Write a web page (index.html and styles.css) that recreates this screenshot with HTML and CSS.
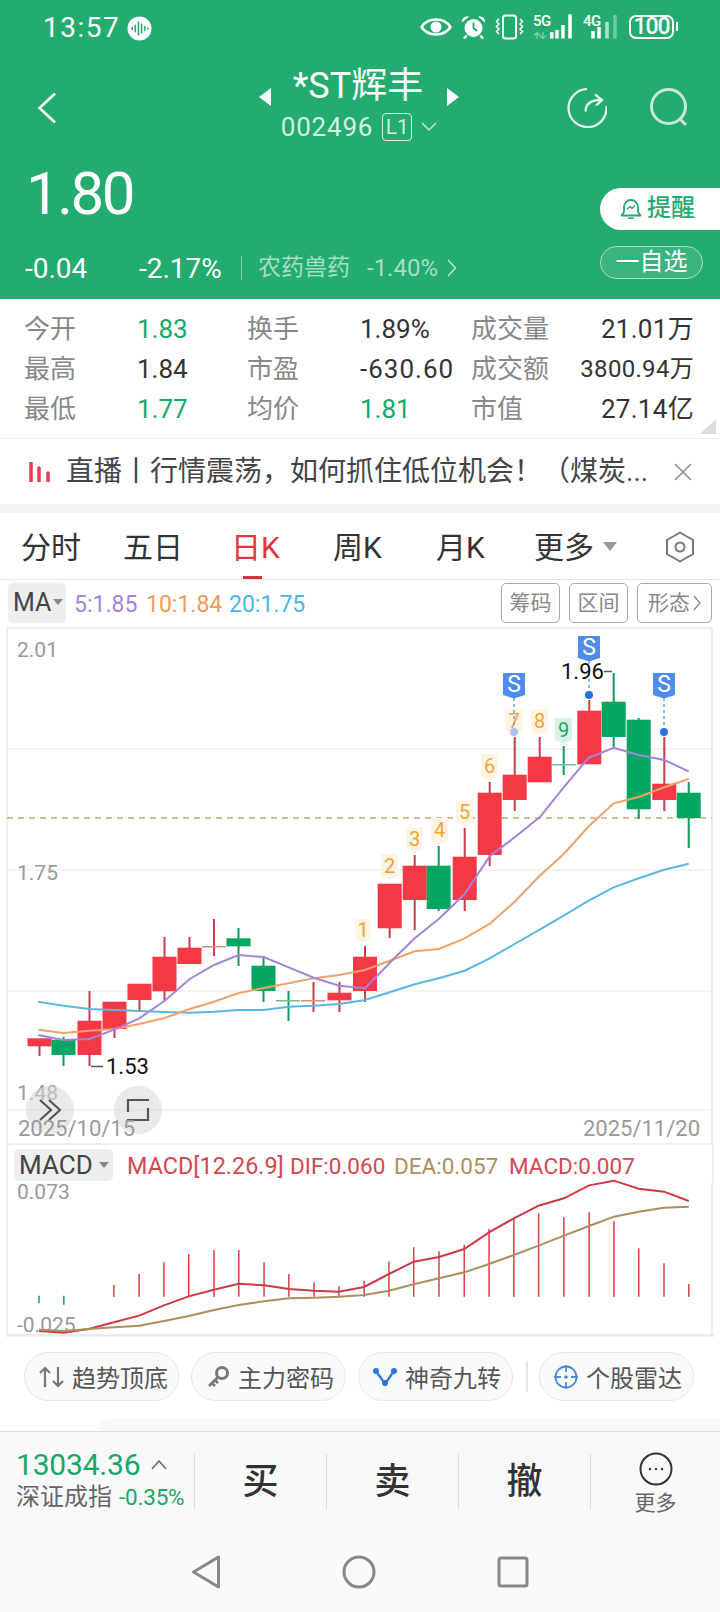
FILE: index.html
```html
<!DOCTYPE html>
<html lang="zh">
<head>
<meta charset="utf-8">
<title>*ST辉丰</title>
<link rel="stylesheet" href="styles.css">
</head>
<body>
<div class="app">
  <header class="top">
    <div class="status">
      <div class="status-left">
        <span class="time">13:57</span>
        <svg class="voice" width="25" height="25" viewBox="0 0 24 24"><circle cx="12" cy="12" r="11.5" fill="#fff"/><path d="M5 11v2M8 9v6M11 6v12M14 8v8M17 10v4M20 11.500v1" stroke="#24ab70" stroke-width="1.500" stroke-linecap="round"/></svg>
      </div>
      <div class="status-right">
        <svg width="32" height="18" viewBox="0 0 32 18"><path d="M1.500 9C5 3.500 10 1.500 16 1.500S27 3.500 30.500 9C27 14.500 22 16.500 16 16.500S5 14.500 1.500 9Z" fill="none" stroke="#fff" stroke-width="2.500"/><circle cx="16" cy="9" r="5.500" fill="#fff"/></svg>
        <svg width="25" height="24" viewBox="0 0 25 24"><circle cx="12.500" cy="13" r="9" fill="#fff"/><path d="M12.500 7.500V13l3.500 3" fill="none" stroke="#24ab70" stroke-width="1.800"/><path d="M1 7.500a5.500 5.500 0 0 1 7-6ZM24 7.500a5.500 5.500 0 0 0-7-6Z" fill="#fff"/><path d="M5.500 20.500l-2.500 3M19.500 20.500l2.500 3" stroke="#fff" stroke-width="2.500"/></svg>
        <svg width="29" height="26" viewBox="0 0 29 26"><rect x="8" y="1.500" width="13" height="23" rx="2.500" fill="none" stroke="#fff" stroke-width="2"/><path d="M4 5l-2.500 2.500L4 10l-2.500 2.500L4 15l-2.500 2.500L4 20M25 5l2.500 2.500L25 10l2.500 2.500L25 15l2.500 2.500L25 20" fill="none" stroke="#fff" stroke-width="1.500"/></svg>
        <div class="signal signal-5g">
          <span class="net">5G</span>
          <svg class="net-arrows" width="14" height="7" viewBox="0 0 14 7"><path d="M4 7V1M1 3.500L4 .5l3 3M10 0v6M7 3.500l3 3 3-3" fill="none" stroke="#fff" stroke-opacity=".4" stroke-width="1.300"/></svg>
          <svg width="24" height="26" viewBox="0 0 24 26"><path d="M1.750 24.500V18.300M7 24.500V16M13 24.500V11M20 24.500V.3" stroke="#fff" stroke-width="3.500"/></svg>
        </div>
        <div class="signal signal-4g">
          <span class="net">4G</span>
          <svg width="28" height="26" viewBox="0 0 28 26"><path d="M3 24.500V17M9 24.500V13" stroke="#fff" stroke-width="3.500"/><path d="M17 24.500V8" stroke="#fff" stroke-opacity=".65" stroke-width="3.500"/><path d="M25 24.500V1" stroke="#fff" stroke-opacity=".35" stroke-width="3.500"/></svg>
        </div>
        <div class="battery"><span class="battery-level">100</span></div>
      </div>
    </div>

    <nav class="nav">
      <svg class="back" width="20" height="32" viewBox="0 0 20 32"><path d="M18 1.500L2.500 16 18 30.500" fill="none" stroke="#fff" stroke-width="2.500"/></svg>
      <div class="title-block">
        <div class="title-row">
          <span class="tri tri-left"></span>
          <h1 class="title">*ST辉丰</h1>
          <span class="tri tri-right"></span>
        </div>
        <div class="code-row">
          <span class="code">002496</span>
          <span class="level">L1</span>
          <svg width="16" height="10" viewBox="0 0 16 10"><path d="M1 1l7 7 7-7" fill="none" stroke="#bfe6d2" stroke-width="1.500"/></svg>
        </div>
      </div>
      <div class="nav-actions">
        <svg width="40" height="40" viewBox="0 0 40 40"><path d="M19 1.200A19 19 0 1 0 39.500 19" fill="none" stroke="#e4f5ec" stroke-width="2.300" stroke-linecap="round"/><path d="M18.700 22.700C18.700 15 24 12 34.500 12" fill="none" stroke="#e4f5ec" stroke-width="2.300" stroke-linecap="round"/><path d="M28.700 7L35 12 29.700 17" fill="none" stroke="#e4f5ec" stroke-width="2.300" stroke-linecap="round"/></svg>
        <svg width="40" height="40" viewBox="0 0 40 40"><circle cx="20.500" cy="18.500" r="17" fill="none" stroke="#c9e8d8" stroke-width="3"/><path d="M32 31l6 6" stroke="#c9e8d8" stroke-width="3"/></svg>
      </div>
    </nav>

    <section class="quote">
      <div class="quote-main">
        <div class="price">1.80</div>
        <div class="change-row">
          <span class="chg">-0.04</span>
          <span class="chg-pct">-2.17%</span>
          <span class="sector">农药兽药</span>
          <span class="sector-pct">-1.40%</span>
          <svg width="10" height="18" viewBox="0 0 10 18"><path d="M1 1l7.500 8L1 17" fill="none" stroke="#bfe6d2" stroke-width="1.500"/></svg>
        </div>
      </div>
      <div class="quote-actions">
        <div class="remind">
          <svg width="22" height="20" viewBox="0 0 22 20"><path d="M4 13V8a7 7 0 0 1 14 0v5l2.500 3.500h-19Z" fill="none" stroke="#24ab70" stroke-width="1.800" stroke-linejoin="round"/><path d="M8 19.200h6" stroke="#24ab70" stroke-width="1.600"/><path d="M7 10.500l3-3 2 2 3-3" fill="none" stroke="#24ab70" stroke-width="1.400"/></svg>
          <span>提醒</span>
        </div>
        <div class="watch">一自选</div>
      </div>
    </section>
  </header>

  <section class="stats">
    <span class="lbl">今开</span><span class="val down">1.83</span>
    <span class="lbl">换手</span><span class="val">1.89%</span>
    <span class="lbl">成交量</span><span class="val end">21.01万</span>
    <span class="lbl">最高</span><span class="val">1.84</span>
    <span class="lbl">市盈</span><span class="val wide">-630.60</span>
    <span class="lbl">成交额</span><span class="val end small">3800.94万</span>
    <span class="lbl">最低</span><span class="val down">1.77</span>
    <span class="lbl">均价</span><span class="val down">1.81</span>
    <span class="lbl">市值</span><span class="val end">27.14亿</span>
    <span class="corner"></span>
  </section>

  <section class="news">
    <svg width="22" height="20" viewBox="0 0 22 20"><path d="M2 1v18M10 6v13M19 11v8" stroke="#e0404c" stroke-width="3.500" stroke-linecap="round"/></svg>
    <span class="news-text">直播丨行情震荡，如何抓住低位机会！（煤炭...</span>
    <svg width="18" height="18" viewBox="0 0 18 18"><path d="M1 1l16 16M17 1L1 17" stroke="#888" stroke-width="1.500"/></svg>
  </section>

  <nav class="tabs">
    <span class="tab t1">分时</span>
    <span class="tab t2">五日</span>
    <span class="tab t3 active">日K</span>
    <span class="tab t4">周K</span>
    <span class="tab t5">月K</span>
    <span class="tab t6">更多<i class="caret"></i></span>
    <svg class="hex" width="30" height="32" viewBox="0 0 30 32"><path d="M15 1.500L28 9v14l-13 7.500L2 23V9Z" fill="none" stroke="#777" stroke-width="2" stroke-linejoin="round"/><circle cx="15" cy="16" r="4.500" fill="none" stroke="#777" stroke-width="2"/></svg>
  </nav>

  <section class="ma-row">
    <div class="chip ma-chip">MA<i class="mini-caret"></i></div>
    <span class="ma5">5:1.85</span>
    <span class="ma10">10:1.84</span>
    <span class="ma20">20:1.75</span>
    <div class="ma-tools">
      <span class="tool">筹码</span>
      <span class="tool">区间</span>
      <span class="tool tool-wide">形态<svg width="8" height="16" viewBox="0 0 8 16"><path d="M1 1l6 7-6 7" fill="none" stroke="#888" stroke-width="1.300"/></svg></span>
    </div>
  </section>

  <svg class="price-chart" width="720" height="516" viewBox="0 628 720 516">
    <path class="frame" d="M7 1144V629H712V1144"/>
    <path class="grid" d="M8 750H711M8 871H711M8 992H711M8 1111H711"/>
    <path class="last" d="M7 819H712"/>

    <g class="wr">
      <path d="M39.500 1047V1057M89.500 992V1067M114.500 1030V1039M139.500 1001V1011M164.500 938V1002M189.500 938V949M214 920V957M313.500 983V1013M339.500 983V1013M365 947V1003M389.700 929V939M414.700 856V931M464.700 829V912M489.700 783V867M514.700 738V812M539.700 738V758M589.300 701V712M664.300 738V812"/>
    </g>
    <g class="wg">
      <path d="M63.500 1038V1067M238.500 929V967M263.500 957V1003M288.500 992V1022M438.700 847V912M563.700 747V776M613.700 674V750M638.700 719V820M688.700 783V849"/>
    </g>
    <path class="dr" d="M202 947.700H226M301 1001.700H325"/>
    <path class="dg" d="M276 1001.700H300M552 765.700H576"/>
    <g class="br">
      <rect x="27.500" y="1039.300" width="24" height="8"/>
      <rect x="77.500" y="1021.700" width="24" height="34.300"/>
      <rect x="102.500" y="1002.700" width="24" height="27.300"/>
      <rect x="127.500" y="984.700" width="24" height="16.300"/>
      <rect x="152.500" y="957.700" width="24" height="34.600"/>
      <rect x="177.500" y="948.700" width="24" height="16.300"/>
      <rect x="327.500" y="993.700" width="24" height="7.600"/>
      <rect x="353" y="957.700" width="24" height="34.300"/>
      <rect x="377.700" y="884.700" width="24" height="44.600"/>
      <rect x="402.700" y="866.700" width="24" height="34.300"/>
      <rect x="452.700" y="857.700" width="24" height="43.300"/>
      <rect x="477.700" y="793.700" width="24" height="62.300"/>
      <rect x="502.700" y="775.700" width="24" height="25.300"/>
      <rect x="527.700" y="757.700" width="24" height="25.600"/>
      <rect x="577.300" y="711.700" width="24" height="53.600"/>
      <rect x="652.300" y="784.700" width="24" height="16.300"/>
    </g>
    <g class="bg">
      <rect x="51.500" y="1040.700" width="24" height="15.300"/>
      <rect x="226.500" y="939.300" width="24" height="8"/>
      <rect x="251.500" y="966.700" width="24" height="25.300"/>
      <rect x="426.700" y="866.700" width="24" height="43.300"/>
      <rect x="601.700" y="702.700" width="24" height="35.300"/>
      <rect x="626.700" y="720.700" width="24" height="89.600"/>
      <rect x="676.700" y="793.700" width="24" height="25.300"/>
    </g>

    <polyline class="l20" points="38.300,1002.700 63.300,1006.700 89.300,1010 114.300,1011 139.300,1012 164.700,1013 189.700,1013.700 214,1012.700 238.700,1011 263.700,1011 288.700,1007.700 313.700,1006.700 339.300,1005 365,1001 389.700,993.300 414.700,985.300 438.700,979.300 464.700,971.700 489.700,959.300 514.700,945 539.700,930.700 563.700,916.700 588.700,901.700 613.700,888.300 638.700,879.300 664.300,870.700 688.700,864.700"/>
    <polyline class="l10" points="38.300,1030.700 63.300,1034 89.300,1031.700 114.300,1030 139.300,1025 164.700,1019 189.700,1010 214,1002.700 238.700,994 263.700,989 288.700,984.300 313.700,979.300 339.300,976 365,971 389.700,961.700 414.700,952.300 438.700,950 464.700,939.300 489.700,924.700 514.700,902.700 539.700,876.700 563.700,855 588.700,827.300 613.700,804.300 638.700,798 664.300,788.300 688.700,780"/>
    <polyline class="l5" points="38.300,1036 63.300,1041 89.300,1040 114.300,1030.700 139.300,1019.300 164.700,1001.700 189.700,980 214,966 238.700,956 263.700,958 288.700,968.300 313.700,978.700 339.300,986.700 365,989.300 396.700,956.700 414.700,939.300 438.700,920 464.700,895 489.700,857.300 514.700,838.300 539.700,818.300 563.700,788.300 588.700,758.700 613.700,748.700 638.700,756 664.300,761 688.700,772.300"/>

    <g class="tags">
      <path class="tag" d="M355 920h16v20l-8 4-8-4Z"/>
      <path class="tag" d="M381 855h17v22l-8.500 4-8.500-4Z"/>
      <path class="tag" d="M406 828h17v22l-8.500 4-8.500-4Z"/>
      <path class="tag" d="M431 819h17v22l-8.500 4-8.500-4Z"/>
      <path class="tag" d="M456 801h17v22l-8.500 4-8.500-4Z"/>
      <path class="tag" d="M481 755h17v22l-8.500 4-8.500-4Z"/>
      <path class="tag" d="M505 710h18v22l-9 4-9-4Z"/>
      <path class="tag" d="M531 710h17v22l-8.500 4-8.500-4Z"/>
      <path class="tag-g" d="M555 719h17v22l-8.500 4-8.500-4Z"/>
      <text class="num" x="363" y="938">1</text>
      <text class="num" x="389.500" y="874">2</text>
      <text class="num" x="414.500" y="847">3</text>
      <text class="num" x="439.500" y="838">4</text>
      <text class="num" x="464.500" y="820">5</text>
      <text class="num" x="489.500" y="774">6</text>
      <text class="num" x="514" y="729">7</text>
      <text class="num" x="539.500" y="729">8</text>
      <text class="num num-g" x="563.500" y="738">9</text>
    </g>

    <g class="flags">
      <path class="dots" d="M514 699V733M589 662V696M664 699V733"/>
      <circle class="dot-faint" cx="514" cy="733" r="4"/>
      <circle class="dot" cx="589" cy="696" r="4"/>
      <circle class="dot" cx="664" cy="733" r="4"/>
      <path class="flag" d="M503 674h22v22l-11 3.500-11-3.500Z"/>
      <path class="flag" d="M578 637h22v22l-11 3.500-11-3.500Z"/>
      <path class="flag" d="M653 674h22v22l-11 3.500-11-3.500Z"/>
      <text class="flag-s" x="514" y="693">S</text>
      <text class="flag-s" x="589" y="656">S</text>
      <text class="flag-s" x="664" y="693">S</text>
    </g>

    <text class="extreme" x="561" y="680">1.96</text>
    <path class="ext-line" d="M604 672.500H612M91 1067.500H103"/>
    <text class="extreme" x="106" y="1075">1.53</text>

    <text class="axis" x="17" y="658">2.01</text>
    <text class="axis" x="17" y="881">1.75</text>
    <text class="axis" x="17" y="1101">1.48</text>

    <circle class="fab" cx="50" cy="1111" r="24"/>
    <circle class="fab" cx="138" cy="1111" r="24"/>
    <path class="fab-icon" d="M40 1101l11 10-11 10M49 1101l11 10-11 10"/>
    <path class="fab-icon" d="M149 1101h-21v12M127 1121h21v-12"/>
    <text class="axis date" x="18" y="1137">2025/10/15</text>
    <text class="axis date" x="700" y="1137" text-anchor="end">2025/11/20</text>
  </svg>

  <section class="macd-head">
    <div class="chip macd-chip">MACD<i class="mini-caret"></i></div>
    <span class="m-red m-1">MACD[12.26.9]</span>
    <span class="m-red m-2">DIF:0.060</span>
    <span class="m-tan m-3">DEA:0.057</span>
    <span class="m-red m-4">MACD:0.007</span>
  </section>

  <svg class="macd-chart" width="720" height="154" viewBox="0 1184 720 154">
    <path class="frame" d="M7 1184V1336M712 1184V1336"/>
    <path class="macd-base" d="M6 1336.500H714"/>
    <text class="axis" x="17" y="1200">0.073</text>
    <text class="axis" x="17" y="1333">-0.025</text>
    <g transform="translate(0 1120) scale(.4592 .33333)">
      <path class="hist-g" d="M85 530V553M139 530V557"/>
      <path class="hist-r" d="M248 533V498M303 533V465M357 533V430M411 533V405M466 533V393M520 533V393M575 533V430M629 533V465M684 533V490M738 533V502M793 533V485M847 533V427M901 533V385M956 533V397M1011 533V377M1065 533V330M1119 533V298M1173 533V282M1228 533V295M1283 533V280M1337 533V307M1391 533V388M1446 533V433M1500 533V495"/>
      <polyline class="dif" points="85,636 139,641 193,630 248,610 303,590 357,559 411,532 466,512 520,494 575,499 629,510 684,515 738,518 793,504 847,465 901,428 956,414 1011,390 1065,340 1119,298 1173,260 1228,238 1283,199 1337,185 1391,209 1446,218 1500,246"/>
      <polyline class="dea" points="85,632 139,636 193,630 248,625 303,620 357,606 411,591 466,573 520,558 575,547 629,538 684,536 738,533 793,528 847,515 901,496 956,478 1011,460 1065,435 1119,408 1173,380 1228,350 1283,321 1337,293 1391,278 1446,266 1500,263"/>
    </g>
  </svg>

  <section class="pills">
    <div class="pill">
      <svg width="25" height="22" viewBox="0 0 25 22"><path d="M6 21V2M1 7l5-5 5 5" fill="none" stroke="#777" stroke-width="2.200"/><path d="M19 1v19M14 15l5 5 5-5" fill="none" stroke="#777" stroke-width="2.200"/></svg>
      <span>趋势顶底</span>
    </div>
    <div class="pill">
      <svg width="24" height="24" viewBox="0 0 24 24"><circle cx="16" cy="8" r="5.500" fill="none" stroke="#777" stroke-width="3"/><path d="M12 12L3 21M6 18l3 3M9 15l3 3" fill="none" stroke="#777" stroke-width="2.600"/></svg>
      <span>主力密码</span>
    </div>
    <div class="pill">
      <svg width="24" height="20" viewBox="0 0 24 20"><path d="M3 4l9 13 9-13" fill="none" stroke="#2f74d8" stroke-width="2.200"/><circle cx="3" cy="4" r="3" fill="#2f74d8"/><circle cx="21" cy="4" r="3" fill="#2f74d8"/><circle cx="12" cy="16" r="3" fill="#2f74d8"/></svg>
      <span>神奇九转</span>
    </div>
    <i class="pill-sep"></i>
    <div class="pill">
      <svg width="24" height="24" viewBox="0 0 24 24"><circle cx="12" cy="12" r="10.500" fill="none" stroke="#4e86dc" stroke-width="1.800"/><path d="M12 0v7M12 17v7M0 12h7M17 12h7" stroke="#4e86dc" stroke-width="1.800"/><circle cx="12" cy="12" r="1.800" fill="#4e86dc"/></svg>
      <span>个股雷达</span>
    </div>
  </section>

  <div class="peek"></div>

  <footer class="trade">
    <div class="index">
      <div class="index-top"><span class="index-val">13034.36</span><svg width="16" height="10" viewBox="0 0 16 10"><path d="M1 9l7-8 7 8" fill="none" stroke="#666" stroke-width="1.500"/></svg></div>
      <div class="index-bot"><span class="index-name">深证成指</span><span class="index-pct">-0.35%</span></div>
    </div>
    <div class="act">买</div>
    <div class="act">卖</div>
    <div class="act">撤</div>
    <div class="more">
      <svg width="34" height="34" viewBox="0 0 34 34"><circle cx="17" cy="17" r="15.500" fill="none" stroke="#333" stroke-width="2"/><circle cx="11" cy="17" r="1.200" fill="#333"/><circle cx="17" cy="17" r="1.200" fill="#333"/><circle cx="23" cy="17" r="1.200" fill="#333"/></svg>
      <span>更多</span>
    </div>
  </footer>

  <nav class="sysnav">
    <svg width="30" height="34" viewBox="0 0 30 34"><path d="M27.500 2L2.500 17l25 15Z" fill="none" stroke="#888" stroke-width="3" stroke-linejoin="round"/></svg>
    <svg width="34" height="34" viewBox="0 0 34 34"><circle cx="17" cy="17" r="15" fill="none" stroke="#888" stroke-width="3"/></svg>
    <svg width="32" height="32" viewBox="0 0 32 32"><rect x="2" y="2" width="28" height="28" rx="2" fill="none" stroke="#888" stroke-width="3"/></svg>
  </nav>
</div>
</body>
</html>
```

FILE: styles.css
```css
* { box-sizing: border-box; margin: 0; padding: 0; }
html, body { background: #fff; }
body { width: 720px; height: 1612px; overflow: hidden; font-family: Roboto, "Noto Sans CJK SC", sans-serif; color: #333; }
.app { width: 720px; height: 1612px; display: flex; flex-direction: column; }
i { font-style: normal; display: block; }
svg { display: block; flex: none; }

/* green header */
.top { height: 299px; background: #24ab70; color: #fff; display: flex; flex-direction: column; flex: none; }
.status { height: 56px; padding: 0 46px 0 43px; display: flex; align-items: center; justify-content: space-between; }
.status-left { display: flex; align-items: center; gap: 7px; }
.time { font-size: 28px; line-height: 32px; letter-spacing: 1.500px; }
.status-right { display: flex; align-items: center; gap: 9px; margin-top: -2px; }
.signal { position: relative; display: flex; align-items: flex-end; height: 26px; }
.signal-5g { padding-left: 17px; }
.signal-4g { padding-left: 9px; margin-left: -2px; }
.signal-4g .net { left: 2px; }
.net { position: absolute; left: 0; top: 0; font-size: 15px; font-weight: 500; line-height: 14px; letter-spacing: -.5px; }
.net-arrows { position: absolute; left: 0; top: 18px; }
.battery { width: 45px; height: 24px; margin-left: 2px; border: 2px solid #fff; border-radius: 7px; display: flex; align-items: center; justify-content: center; position: relative; }
.battery::after { content: ""; position: absolute; right: -6px; top: 5px; width: 2px; height: 9px; background: #fff; }
.battery-level { font-size: 23px; font-weight: 500; line-height: 20px; letter-spacing: -1px; }

.nav { height: 89px; padding: 0 32px 0 37px; display: grid; grid-template-columns: 1fr auto 1fr; align-items: start; }
.back { margin-top: 36px; }
.title-block { display: flex; flex-direction: column; align-items: center; margin-top: 8px; margin-right: 7px; }
.title-row { display: flex; align-items: center; gap: 22px; height: 44px; }
.title { font-size: 36px; font-weight: 400; line-height: 44px; white-space: nowrap; }
.tri { width: 0; height: 0; border-top: 9px solid transparent; border-bottom: 9px solid transparent; margin-top: 21px; }
.tri-left { border-right: 12px solid #fff; }
.tri-right { border-left: 12px solid #fff; margin-left: 2px; }
.code-row { display: flex; align-items: center; gap: 9px; height: 30px; color: #d4f0e1; margin-top: 4px; }
.code { font-size: 26px; letter-spacing: .8px; }
.level { width: 30px; height: 28px; border: 1px solid #d4f0e1; border-radius: 4px; font-size: 21px; line-height: 26px; text-align: center; }
.nav-actions { display: flex; gap: 41px; margin-top: 32px; justify-self: end; }

.quote { flex: 1; display: flex; justify-content: space-between; padding-left: 25px; }
.quote-main { display: flex; flex-direction: column; }
.price { font-size: 60px; line-height: 70px; margin-top: 14px; margin-left: 1px; letter-spacing: -2.500px; }
.change-row { display: flex; align-items: center; margin-top: 24px; height: 30px; }
.chg { width: 114px; font-size: 28px; }
.chg-pct { width: 102px; font-size: 28px; }
.sector { border-left: 1px solid #7fcba5; padding-left: 16px; height: 24px; line-height: 24px; font-size: 23px; color: #a9dfc3; width: 126px; }
.sector-pct { font-size: 24px; color: #a9dfc3; width: 80px; }
.quote-actions { display: flex; flex-direction: column; align-items: flex-end; padding-top: 43px; }
.remind { width: 120px; height: 42px; background: #fff; border-radius: 21px 0 0 21px; color: #24ab70; font-size: 24px; display: flex; align-items: center; padding-left: 20px; gap: 5px; font-weight: 500; }
.remind span { line-height: 36px; margin-top: -3px; }
.watch { width: 103px; height: 33px; margin-top: 16px; margin-right: 17px; border: 1px solid #a9dfc3; border-radius: 17px; background: rgba(255,255,255,.1); font-size: 24px; line-height: 30px; text-align: center; }

/* stats */
.stats { height: 140px; flex: none; padding: 10px 26px 0 24px; display: grid; grid-template-columns: 113px 110px 113px 111px 90px 133px; grid-auto-rows: 40px; align-items: center; border-bottom: 1px solid #eee; position: relative; }
.lbl { font-size: 26px; line-height: 36px; color: #888; white-space: nowrap; }
.val { font-size: 26px; line-height: 36px; color: #333; white-space: nowrap; }
.val.wide { letter-spacing: 1px; }
.val.end { text-align: right; letter-spacing: .3px; }
.val.small { font-size: 24px; }
.down { color: #16a866; }
.corner { position: absolute; right: 4px; bottom: 4px; width: 0; height: 0; border-left: 16px solid transparent; border-bottom: 15px solid #ddd; }

/* news */
.news { flex: none; height: 74px; padding: 0 28px 0 29px; display: flex; align-items: center; border-bottom: 9px solid #f5f5f5; }
.news-text { flex: 1; font-size: 28px; line-height: 40px; color: #444; margin-left: 15px; white-space: nowrap; overflow: hidden; }

/* tabs */
.tabs { height: 67px; flex: none; border-bottom: 1px solid #e8e8e8; display: flex; align-items: center; position: relative; padding-left: 21px; }
.tab { font-size: 30px; color: #333; white-space: nowrap; display: flex; align-items: center; height: 66px; padding-bottom: 3px; position: relative; }
.t1 { width: 102px; }
.t2 { width: 108px; }
.t3 { width: 102px; }
.t4 { width: 103px; }
.t5 { width: 98px; }
.t6 { width: 131px; }
.hex { margin-top: 2px; }
.active { color: #e0343f; }
.active::after { content: ""; position: absolute; left: 12px; bottom: 0; width: 19px; height: 3px; background: #d8333f; }
.caret { width: 0; height: 0; margin-left: 9px; margin-top: 3px; border-left: 7px solid transparent; border-right: 7px solid transparent; border-top: 9px solid #999; }

/* MA row */
.ma-row { height: 47px; flex: none; padding: 3px 8px 0; display: flex; align-items: flex-start; font-size: 23px; }
.chip { background: #eee; border-radius: 5px; color: #444; display: flex; align-items: center; line-height: 30px; }
.ma-chip { width: 58px; height: 40px; padding-left: 5px; font-size: 25px; }
.mini-caret { width: 0; height: 0; margin-left: 2px; margin-top: -3px; border-left: 5px solid transparent; border-right: 5px solid transparent; border-top: 6px solid #888; }
.ma5, .ma10, .ma20 { line-height: 40px; margin-top: 2px; }
.ma5 { color: #a383de; margin-left: 8px; width: 72px; }
.ma10 { color: #ef9c5a; width: 83px; }
.ma20 { color: #4fb4e8; }
.ma-tools { margin-left: auto; display: flex; gap: 9px; }
.tool { width: 59px; height: 40px; border: 1px solid #aaa; border-radius: 5px; font-size: 21px; line-height: 38px; color: #888; text-align: center; }
.tool-wide { width: 75px; display: flex; align-items: center; justify-content: center; gap: 3px; }

/* charts */
.price-chart, .macd-chart { font-family: Roboto, sans-serif; overflow: visible; flex: none; }
.frame { fill: none; stroke: #eee; stroke-width: 2; }
.grid { fill: none; stroke: #f1f1f1; stroke-width: 1.500; }
.last { fill: none; stroke: #c9a877; stroke-width: 1.500; stroke-dasharray: 6 5; }
.wr path { fill: none; stroke: #c73c4a; stroke-width: 2; }
.wg path { fill: none; stroke: #0d9c5a; stroke-width: 2; }
.dr { fill: none; stroke: #d88c90; stroke-width: 1.500; }
.dg { fill: none; stroke: #6fc09a; stroke-width: 1.500; }
.br rect { fill: #f43845; }
.bg rect { fill: #05a65f; }
.l5, .l10, .l20 { fill: none; stroke-width: 2; }
.l5 { stroke: #a583d8; }
.l10 { stroke: #f0a268; }
.l20 { stroke: #5cb6e4; }
.tag { fill: #fdf4e6; }
.tag-g { fill: #daf2e5; }
.num { font-size: 20px; fill: #f0a434; text-anchor: middle; }
.num-g { fill: #14a763; }
.dots { fill: none; stroke: #6f9fe8; stroke-width: 1.500; stroke-dasharray: 3 3; }
.dot { fill: #2a72e6; }
.dot-faint { fill: #a9c3e8; }
.flag { fill: #4f8cf0; }
.flag-s { font-size: 23px; font-weight: 400; fill: #fff; text-anchor: middle; }
.extreme { font-size: 22px; fill: #111; }
.ext-line { fill: none; stroke: #555; stroke-width: 1.500; }
.axis { font-size: 21px; fill: #999; }
.date { font-size: 22px; }
.fab { fill: rgba(215,215,215,.55); }
.fab-icon { fill: none; stroke: #555; stroke-width: 2.200; }

.macd-head { height: 40px; flex: none; margin: 0 6px; padding: 4px 0 0 7px; border-left: 2px solid #eee; border-right: 2px solid #eee; border-top: 2px solid #eee; display: flex; align-items: flex-start; font-size: 22.500px; }
.macd-chip { width: 99px; height: 32px; padding-left: 5px; font-size: 26px; margin-left: -1px; }
.macd-chip .mini-caret { margin-left: 6px; margin-top: 0; }
.m-red { color: #d34750; }
.m-tan { color: #ae8e5e; }
.m-1, .m-2, .m-3, .m-4 { line-height: 34px; white-space: nowrap; }
.m-1 { margin-left: 14px; width: 163px; font-size: 23.400px; }
.m-2 { width: 104px; }
.m-3 { width: 115px; }
.macd-base { fill: none; stroke: #e8e8e8; stroke-width: 2.500; }
.hist-g { fill: none; stroke: #10a065; stroke-width: 1.500; vector-effect: non-scaling-stroke; }
.hist-r { fill: none; stroke: #d8404a; stroke-width: 1.500; vector-effect: non-scaling-stroke; }
.dif { fill: none; stroke: #cc3a45; stroke-width: 2; vector-effect: non-scaling-stroke; }
.dea { fill: none; stroke: #ae8e5e; stroke-width: 2; vector-effect: non-scaling-stroke; }

/* pills */
.pills { flex: none; padding: 15px 0 0 24px; height: 82px; display: flex; align-items: flex-start; }
.pill { width: 155px; height: 49px; border: 1px solid #e6e6e6; border-radius: 25px; background: #fafafa; font-size: 24px; color: #555; display: flex; align-items: center; padding-left: 14px; gap: 8px; margin-right: 12px; white-space: nowrap; }
.pill-sep { width: 2px; height: 31px; margin: 9px 11px 0 1px; background: #e6e6e6; }
.peek { flex: none; height: 12px; margin-left: 100px; background: #f8f8f8; border-radius: 8px 0 0 0; }

/* trade bar */
.trade { flex: none; height: 100px; background: #f9f9fb; border-top: 1px solid #ddd; display: flex; align-items: center; position: relative; }
.index { width: 195px; padding-left: 16px; height: 56px; border-right: 1px solid #ddd; white-space: nowrap; }
.index-top { display: flex; align-items: center; gap: 11px; height: 30px; margin-top: -4px; }
.index-val { font-size: 30px; color: #16a866; line-height: 30px; letter-spacing: -.2px; }
.index-bot { display: flex; align-items: center; gap: 7px; height: 30px; margin-top: 2px; }
.index-name { font-size: 24px; color: #666; line-height: 30px; }
.index-pct { font-size: 22.500px; color: #16a866; letter-spacing: -.2px; line-height: 30px; }
.act { width: 132px; height: 56px; border-right: 1px solid #ddd; font-size: 36px; line-height: 56px; text-align: center; color: #333; font-weight: 500; }
.more { flex: 1; display: flex; flex-direction: column; align-items: center; margin-top: 5px; }
.more span { font-size: 21px; color: #666; line-height: 28px; margin-top: 3px; }
.sysnav { flex: 1; background: #fafafb; display: flex; align-items: center; padding-left: 191px; gap: 121px; }
```
